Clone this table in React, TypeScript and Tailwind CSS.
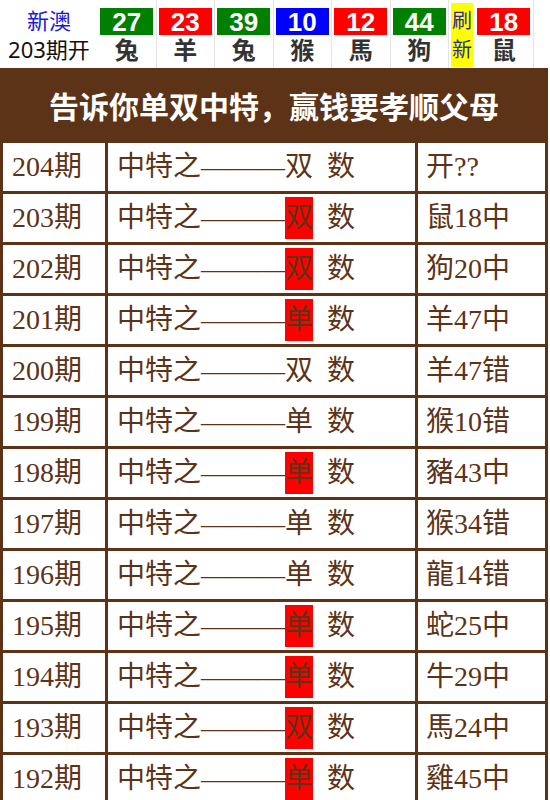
const balls = [
  { n: "27", z: "兔", c: "bg-[#008000]" },
  { n: "23", z: "羊", c: "bg-[#ff0000]" },
  { n: "39", z: "兔", c: "bg-[#008000]" },
  { n: "10", z: "猴", c: "bg-[#0000ff]" },
  { n: "12", z: "馬", c: "bg-[#ff0000]" },
  { n: "44", z: "狗", c: "bg-[#008000]" },
];

const rows = [
  { p: "204", k: "双", hit: false, r: "开??" },
  { p: "203", k: "双", hit: true, r: "鼠18中" },
  { p: "202", k: "双", hit: true, r: "狗20中" },
  { p: "201", k: "单", hit: true, r: "羊47中" },
  { p: "200", k: "双", hit: false, r: "羊47错" },
  { p: "199", k: "单", hit: false, r: "猴10错" },
  { p: "198", k: "单", hit: true, r: "豬43中" },
  { p: "197", k: "单", hit: false, r: "猴34错" },
  { p: "196", k: "单", hit: false, r: "龍14错" },
  { p: "195", k: "单", hit: true, r: "蛇25中" },
  { p: "194", k: "单", hit: true, r: "牛29中" },
  { p: "193", k: "双", hit: true, r: "馬24中" },
  { p: "192", k: "单", hit: true, r: "雞45中" },
];

function Ball({ n, z, c }: { n: string; z: string; c: string }) {
  return (
    <div className="w-[58.5px] h-full flex flex-col items-center border-r border-[#e4e4e4] pt-[8px]">
      <div className={`${c} w-[53px] h-[27px] flex items-center justify-center text-white font-bold text-[26px] leading-none font-['Liberation_Sans',sans-serif]`}>
        {n}
      </div>
      <div className="mt-[1px] text-[24px] leading-[28px] font-bold text-[#333]">{z}</div>
    </div>
  );
}

export default function App() {
  return (
    <div className="w-[550px] h-[800px] overflow-hidden bg-white font-['Noto_Sans','Noto_Sans_CJK_SC',sans-serif]">
      {/* draw bar */}
      <div className="h-[68px] flex">
        <div className="w-[98px] flex flex-col items-center pt-[6px]">
          <div className="text-[22px] leading-[29px] text-[#1a1ad0]">新澳</div>
          <div className="text-[22px] leading-[29px] text-[#111]">203期开</div>
        </div>
        {balls.map((b, i) => (
          <Ball key={i} {...b} />
        ))}
        <div className="ml-[2px] w-[22px] h-[64px] mt-[3px] bg-[#ffff00] flex flex-col items-center justify-center text-[20px] leading-[29px] text-[#2a2aa0]">
          <span>刷</span>
          <span>新</span>
        </div>
        <div className="ml-[2px]">
          <Ball n="18" z="鼠" c="bg-[#ff0000]" />
        </div>
      </div>

      {/* brown board */}
      <div className="bg-[#5c3317] w-[548px]">
        <div className="h-[72px] flex items-center justify-center pt-[4px] text-white font-bold text-[30px]">
          告诉你单双中特，赢钱要孝顺父母
        </div>
        <div className="grid grid-cols-[102px_307px_127px] gap-[3px] p-[3px] text-[#5c3317] text-[28px] font-['Liberation_Serif','Noto_Sans_CJK_SC',serif]">
          {rows.map((row) => (
            <div key={row.p} className="contents">
              <div className="bg-white h-[48px] flex items-center pl-[9px]">{row.p}期</div>
              <div className="bg-white h-[48px] flex items-center pl-[9px] whitespace-pre">
                <span>中特之———</span>
                <span className={row.hit ? "bg-[#ff0000]" : ""}>{row.k}</span>
                <span>  数</span>
              </div>
              <div className="bg-white h-[48px] flex items-center pl-[8px]">{row.r}</div>
            </div>
          ))}
        </div>
      </div>
    </div>
  );
}
